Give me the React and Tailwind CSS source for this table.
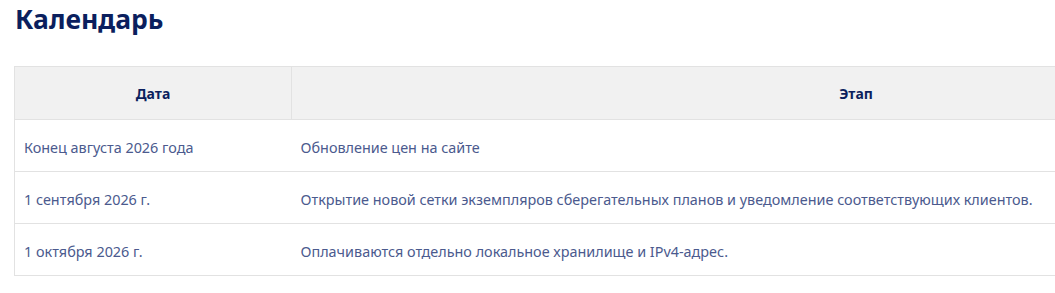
import React from "react"

const rows = [
  { date: "Конец августа 2026 года", stage: "Обновление цен на сайте" },
  { date: "1 сентября 2026 г.", stage: "Открытие новой сетки экземпляров сберегательных планов и уведомление соответствующих клиентов." },
  { date: "1 октября 2026 г.", stage: "Оплачиваются отдельно локальное хранилище и IPv4-адрес." },
]

export default function App() {
  return (
    <div className="w-[1055px] h-[293px] overflow-hidden bg-white font-['Noto_Sans',sans-serif]">
      <h2 className="pl-[15px] pt-[2px] text-[26.5px] leading-[34px] font-bold text-[#0b1f5e]">Календарь</h2>
      <table className="mt-[30px] ml-[14px] w-[1407px] border-collapse text-[14.4px] table-fixed">
        <thead>
          <tr className="bg-[#f1f1f1] h-[53px]">
            <th className="w-[277px] border border-[#e2e2e2] text-[14px] font-bold text-[#0b1f5e]">Дата</th>
            <th className="border border-[#e2e2e2] text-[14px] font-bold text-[#0b1f5e]">Этап</th>
          </tr>
        </thead>
        <tbody>
          {rows.map((r) => (
            <tr key={r.date} className="h-[52px] border-b border-[#e2e2e2]">
              <td className="pl-[9px] pt-[4px] border-l border-[#e2e2e2] text-[#4b5a8e]">{r.date}</td>
              <td className="pl-[9px] pt-[4px] text-[#4b5a8e]">{r.stage}</td>
            </tr>
          ))}
        </tbody>
      </table>
    </div>
  )
}
